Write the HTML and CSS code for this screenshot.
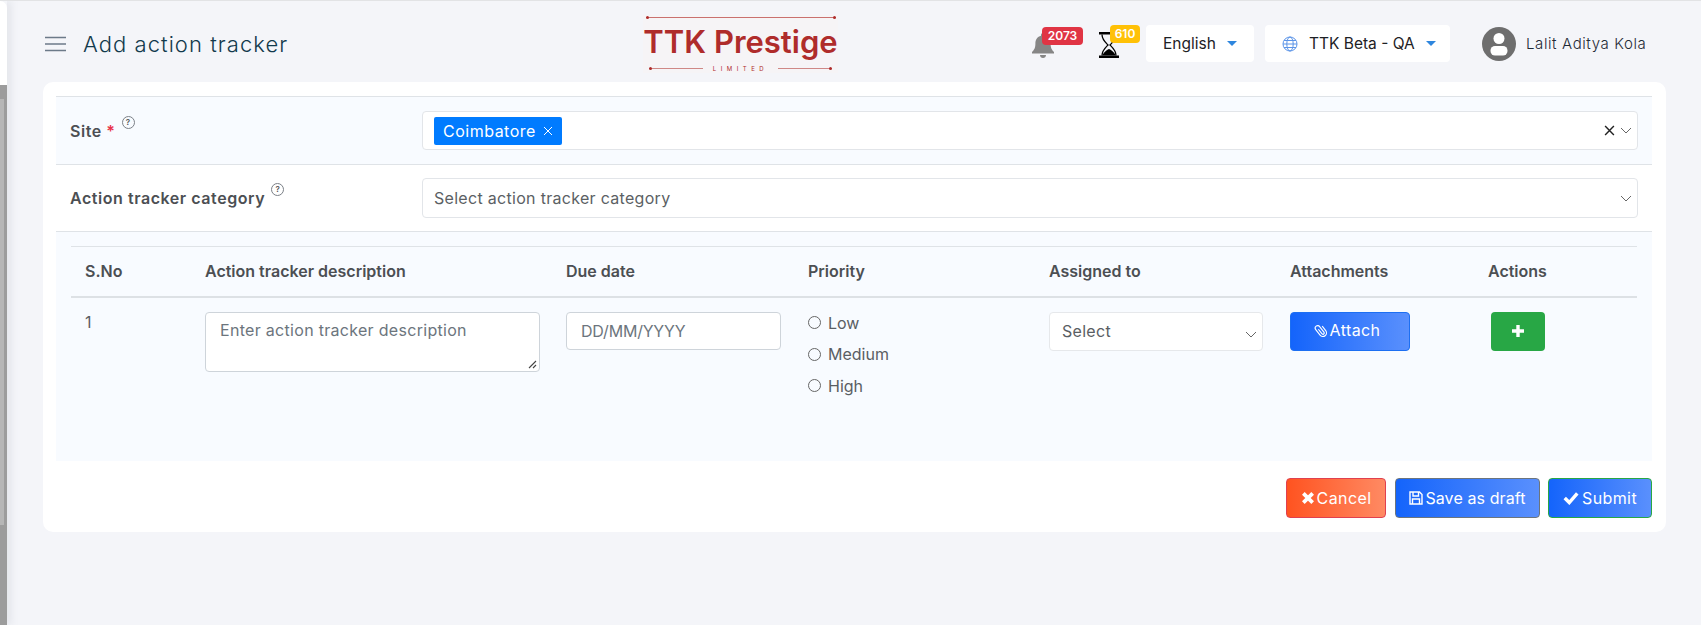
FILE: index.html
```html
<!DOCTYPE html>
<html>
<head>
    <title>Add action tracker</title>
    <link rel="stylesheet" href="styles.css">
</head>
<body>
    <div class="sidebar">
        <div class="sidebar_top"></div>
        <div class="sidebar_track"><div class="sidebar_thumb"></div></div>
    </div>
    <div class="main">
        <div class="topbar">
            <svg class="hamburger" viewBox="0 0 21 16"><path d="M0 1.500h21M0 8h21M0 14.500h21" stroke="#6c7a89" stroke-width="1.600" fill="none"/></svg>
            <div class="page_title">Add action tracker</div>
            <div class="logo">
                <div class="logo_rule"></div>
                <div class="logo_name">TTK Prestige</div>
                <div class="logo_bottom"><span class="logo_line logo_line_left"></span><span class="logo_small">LIMITED</span><span class="logo_line logo_line_right"></span></div>
            </div>
            <div class="notif notif_bell">
                <svg class="bell" viewBox="0 0 24 26"><path d="M12 1c1.200 0 2 .9 2 2v.8c3.600.9 5.600 3.900 5.600 7.700 0 4.500 1.300 6.500 3.400 8.500v1.500H1V20c2.100-2 3.400-4 3.400-8.500 0-3.800 2-6.800 5.600-7.700V3c0-1.100.8-2 2-2zM9 23h6c0 1.700-1.300 3-3 3s-3-1.300-3-3z" fill="#868686"/></svg>
                <span class="badge badge_red">2073</span>
            </div>
            <div class="notif notif_glass">
                <svg class="glass" viewBox="0 0 22 28"><path d="M1 1h20v2.500H1zM1 24.500h20V27H1z" fill="#000"/><path d="M4 3.500c0 5 3.500 8 6 10.500-2.500 2.500-6 5.500-6 10.500M18 3.500c0 5-3.500 8-6 10.500 2.500 2.500 6 5.500 6 10.500" fill="none" stroke="#000" stroke-width="1.300"/><path d="M4.500 24.500c.4-2.500 3.500-5 6.500-6.500 3 1.500 6.100 4 6.500 6.500z" fill="#000"/></svg>
                <span class="badge badge_yellow">610</span>
            </div>
            <div class="top_box box_lang">English<span class="caret"></span></div>
            <div class="top_box box_site">
                <svg class="globe" viewBox="0 0 16 16"><g fill="none" stroke="#5b94e8" stroke-width="1"><circle cx="8" cy="8" r="7"/><ellipse cx="8" cy="8" rx="3.200" ry="7"/><path d="M1 8h14M2 4.500h12M2 11.500h12"/></g></svg>
                TTK Beta - QA<span class="caret"></span>
            </div>
            <div class="user">
                <svg class="avatar" viewBox="0 0 34 34"><circle cx="17" cy="17" r="17" fill="#6e6e6e"/><circle cx="17" cy="11.500" r="5.500" fill="#fff"/><rect x="8.500" y="19" width="17" height="9.500" rx="4.500" fill="#fff"/></svg>
                <span>Lalit Aditya Kola</span>
            </div>
        </div>

        <div class="card">
            <div class="form_row row_tint">
                <div class="form_label">Site <span class="required">*</span><span class="help">?</span></div>
                <div class="select_box select_site">
                    <span class="tag">Coimbatore <svg class="tag_x" viewBox="0 0 10 10"><path d="M1 1l8 8M9 1l-8 8" stroke="#fff" stroke-width="1" fill="none"/></svg></span>
                    <svg class="clear_x" viewBox="0 0 10 10"><path d="M1 1l8 8M9 1l-8 8" stroke="#222" stroke-width="1.300" fill="none"/></svg>
                    <svg class="chevron" viewBox="0 0 12 7"><path d="M1 1l5 5 5-5" stroke="#666" stroke-width="1" fill="none"/></svg>
                </div>
            </div>
            <div class="form_row row_second">
                <div class="form_label">Action tracker category<span class="help">?</span></div>
                <div class="select_box select_category">
                    <span class="placeholder">Select action tracker category</span>
                    <svg class="chevron" viewBox="0 0 12 7"><path d="M1 1l5 5 5-5" stroke="#666" stroke-width="1" fill="none"/></svg>
                </div>
            </div>
            <div class="table_wrap">
                <table class="tracker_table">
                    <thead>
                        <tr>
                            <th class="col_no">S.No</th>
                            <th class="col_desc">Action tracker description</th>
                            <th class="col_date">Due date</th>
                            <th class="col_prio">Priority</th>
                            <th class="col_user">Assigned to</th>
                            <th class="col_att">Attachments</th>
                            <th>Actions</th>
                        </tr>
                    </thead>
                    <tbody>
                        <tr>
                            <td class="cell_no">1</td>
                            <td><div class="input_box area_box">Enter action tracker description
                                <svg class="grip" viewBox="0 0 9 9"><path d="M1 8l7-7M5 8l3-3" stroke="#444" stroke-width="1.100" fill="none"/></svg>
                            </div></td>
                            <td><div class="input_box date_box">DD/MM/YYYY</div></td>
                            <td>
                                <div class="radio_line"><span class="radio"></span>Low</div>
                                <div class="radio_line"><span class="radio"></span>Medium</div>
                                <div class="radio_line"><span class="radio"></span>High</div>
                            </td>
                            <td><div class="input_box user_box">Select
                                <svg class="chevron" viewBox="0 0 12 7"><path d="M1 1l5 5 5-5" stroke="#666" stroke-width="1" fill="none"/></svg>
                            </div></td>
                            <td><div class="btn btn_attach">
                                <svg class="clip" viewBox="0 0 16 16"><path transform="rotate(-38 8 8)" d="M6.500 5v6.500a1.500 1.500 0 0 0 3 0V3.500a2.800 2.800 0 0 0-5.600 0v8a4.100 4.100 0 0 0 8.200 0V5" stroke="#fff" stroke-width="1.300" fill="none"/></svg>Attach</div></td>
                            <td><div class="btn btn_add"><svg class="plus" viewBox="0 0 12 12"><path d="M6 0v12M0 6h12" stroke="#fff" stroke-width="3.400" fill="none"/></svg></div></td>
                        </tr>
                    </tbody>
                </table>
            </div>
            <div class="card_footer">
                <div class="btn btn_cancel"><svg class="btn_icon" viewBox="0 0 12 12"><path d="M2 2l8 8M10 2l-8 8" stroke="#fff" stroke-width="3.200" fill="none"/></svg>Cancel</div>
                <div class="btn btn_draft"><svg class="btn_icon" viewBox="0 0 14 14"><path d="M1 1h9.500L13 3.500V13H1zM4 1.500v3.500h5.500V1.500M3.500 13V8h7v5" stroke="#fff" stroke-width="1.400" fill="none"/></svg>Save as draft</div>
                <div class="btn btn_submit"><svg class="btn_icon btn_icon_check" viewBox="0 0 14 12"><path d="M1.500 6l4 4 7-8" stroke="#fff" stroke-width="3" fill="none"/></svg>Submit</div>
            </div>
        </div>
    </div>
</body>
</html>
```

FILE: styles.css
```css
html, body {
    margin: 0;
    height: 100%;
}
body {
    display: flex;
    background-color: #f4f5f9;
    border-top: 1px solid #e2e3e5;
    box-sizing: border-box;
    font-family: "Inter", "Liberation Sans", sans-serif;
    color: #4a4f55;
    overflow: hidden;
}

/* left edge */
.sidebar {
    width: 7px;
    flex: none;
    display: flex;
    flex-direction: column;
    box-shadow: 3px 0 8px rgba(120, 125, 145, 0.18);
}
.sidebar_top {
    height: 84px;
    background: #fff;
    border-top-right-radius: 8px;
}
.sidebar_track {
    flex: 1;
    background: #9c9c9c;
    padding-top: 14px;
}
.sidebar_thumb {
    width: 4px;
    height: 426px;
    background: #b6b6b6;
}

.main {
    flex: 1;
    min-width: 0;
    padding-right: 35px;
    padding-left: 36px;
}

/* top bar */
.topbar {
    height: 81px;
    padding-top: 4px;
    box-sizing: border-box;
    display: flex;
    align-items: center;
    font-size: 15px;
}
.hamburger {
    width: 21px;
    height: 16px;
    margin-left: 2px;
}
.page_title {
    font-size: 22px;
    font-weight: 300;
    color: #123a4c;
    margin-left: 17px;
    width: 560px;
    letter-spacing: 1.05px;
    flex: none;
}
.logo {
    width: 195px;
    height: 58px;
    flex: none;
    background: #f6f4f6;
    color: #af2c2b;
    display: flex;
    flex-direction: column;
    align-items: center;
}
.logo_rule {
    position: relative;
    width: 190px;
    height: 1px;
    margin-top: 2px;
    background: #c9716f;
}
.logo_rule::before,
.logo_rule::after,
.logo_line::before {
    content: "";
    position: absolute;
    top: -1px;
    width: 3px;
    height: 3px;
    border-radius: 50%;
    background: #af2c2b;
}
.logo_rule::before { left: 0; }
.logo_rule::after { right: 0; }
.logo_name {
    font-family: "Inter", sans-serif;
    font-size: 31px;
    font-weight: 600;
    line-height: 40px;
    margin-top: 4px;
    white-space: nowrap;
}
.logo_bottom {
    display: flex;
    align-items: center;
    gap: 10px;
    margin-top: 3px;
}
.logo_line {
    position: relative;
    width: 54px;
    height: 1px;
    background: #cf8886;
}
.logo_line_left::before { left: 0; }
.logo_line_right::before { right: 0; }
.logo_small {
    font-size: 6px;
    letter-spacing: 4.500px;
}
.notif {
    position: relative;
    flex: none;
    margin-top: 2px;
}
.notif_bell {
    width: 26px;
    height: 26px;
    margin-left: 193px;
}
.bell {
    width: 24px;
    height: 26px;
}
.notif_glass {
    width: 24px;
    height: 28px;
    margin-left: 41px;
}
.glass {
    width: 22px;
    height: 28px;
}
.badge {
    position: absolute;
    font-size: 12px;
    font-weight: 600;
    color: #fff;
    height: 18px;
    line-height: 18px;
    border-radius: 4px;
    text-align: center;
}
.badge_red {
    background: #e03444;
    width: 41px;
    left: 11px;
    top: -5px;
}
.badge_yellow {
    background: #ffc107;
    width: 30px;
    left: 12px;
    top: -6px;
}
.top_box {
    height: 37px;
    background: #fff;
    border-radius: 4px;
    color: #1d2125;
    font-size: 15.500px;
    display: flex;
    align-items: center;
    box-sizing: border-box;
    flex: none;
}
.box_lang {
    width: 108px;
    margin-left: 24px;
    padding-left: 17px;
}
.box_site {
    width: 185px;
    margin-left: 11px;
    padding-left: 17px;
}
.caret {
    width: 0;
    height: 0;
    border: 5px solid transparent;
    border-top: 5px solid #2e86de;
    border-bottom: none;
    margin-left: 11px;
}
.globe {
    width: 16px;
    height: 16px;
    margin-right: 11px;
}
.user {
    display: flex;
    align-items: center;
    margin-left: 32px;
    font-size: 15px;
    letter-spacing: 0.6px;
    font-weight: 300;
    color: #1f2a36;
    white-space: nowrap;
}
.avatar {
    width: 34px;
    height: 34px;
    margin-right: 10px;
}

/* card */
.card {
    background: #fff;
    border-radius: 10px;
    padding: 14px 14px 14px 13px;
    height: 450px;
    box-sizing: border-box;
}
.form_row {
    display: flex;
    align-items: center;
    border-top: 1px solid #dfe3e7;
    padding-left: 14px;
    padding-right: 14px;
}
.row_tint {
    background: #f8fbff;
    height: 68px;
    box-sizing: border-box;
}
.row_second {
    height: 68px;
    box-sizing: border-box;
    border-bottom: 1px solid #dfe3e7;
}
.form_label {
    width: 352px;
    flex: none;
    font-size: 16px;
    letter-spacing: 0.55px;
    font-weight: 600;
    color: #4c4f53;
    padding-bottom: 5px;
}
.required {
    color: #e8334a;
}
.help {
    display: inline-block;
    width: 11px;
    height: 11px;
    line-height: 11px;
    border: 1px solid #7b8087;
    border-radius: 50%;
    font-size: 8px;
    letter-spacing: 0;
    text-align: center;
    margin-left: 6px;
    vertical-align: 12px;
    color: #555;
}
.select_box {
    flex: 1;
    display: flex;
    align-items: center;
    background: #fff;
    border: 1px solid #e2e5e9;
    border-radius: 4px;
    box-sizing: border-box;
    padding-left: 11px;
    padding-right: 5px;
}
.select_site {
    height: 39px;
}
.select_category {
    height: 40px;
}
.tag {
    background: #007bff;
    color: #fff;
    font-size: 16px;
    letter-spacing: 0.5px;
    height: 28px;
    line-height: 28px;
    border-radius: 2px;
    padding: 0 9px;
    display: flex;
    align-items: center;
}
.tag_x {
    width: 10px;
    height: 10px;
    margin-left: 7px;
}
.clear_x {
    width: 11px;
    height: 11px;
    margin-left: auto;
    margin-right: 5px;
}
.chevron {
    width: 12px;
    height: 7px;
}
.select_category .chevron {
    margin-left: auto;
}
.placeholder {
    font-size: 16px;
    letter-spacing: 0.3px;
    color: #5b5f64;
}

/* table */
.table_wrap {
    background: #f8fbff;
    padding: 14px 15px 0 15px;
    height: 229px;
    box-sizing: border-box;
}
.tracker_table {
    width: 100%;
    table-layout: fixed;
    border-collapse: collapse;
    border-top: 1px solid #dfe3e7;
}
.tracker_table th {
    box-sizing: border-box;
    text-align: left;
    font-size: 16px;
    font-weight: 600;
    color: #4c4f53;
    height: 50px;
    padding: 0 12px 0 14px;
    border-bottom: 2px solid #dde1e5;
}
.tracker_table td {
    vertical-align: top;
    padding: 14px 12px 0 14px;
    font-size: 16px;
    color: #5a5e63;
}
.col_no { width: 120px; }
.col_desc { width: 361px; }
.col_date { width: 242px; }
.col_prio { width: 241px; }
.col_user { width: 241px; }
.col_att { width: 198px; }
.cell_no {
    line-height: 20px;
}
.input_box {
    position: relative;
    background: #fff;
    border: 1px solid #ced4da;
    border-radius: 4px;
    box-sizing: border-box;
    color: #6c757d;
    padding-left: 14px;
}
.area_box {
    height: 60px;
    padding-top: 7px;
    letter-spacing: 0.3px;
}
.date_box {
    height: 38px;
    line-height: 36px;
    letter-spacing: -0.2px;
    margin-right: 1px;
}
.user_box {
    height: 39px;
    line-height: 37px;
    border-color: #e6e8eb;
    padding-left: 12px;
    color: #5a5e63;
    letter-spacing: 0.3px;
    margin-right: 1px;
}
.user_box .chevron {
    position: absolute;
    right: 5px;
    top: 18px;
}
.grip {
    position: absolute;
    right: 2px;
    bottom: 2px;
    width: 9px;
    height: 9px;
}
.radio_line {
    display: flex;
    align-items: center;
    height: 32px;
    margin-top: -5px;
    margin-bottom: 4.500px;
}
.radio {
    width: 11px;
    height: 11px;
    border: 1px solid #666;
    border-radius: 50%;
    margin-right: 7px;
}
.btn {
    display: flex;
    align-items: center;
    justify-content: center;
    box-sizing: border-box;
    color: #fff;
    font-size: 16px;
    letter-spacing: 0.4px;
    border-radius: 4px;
}
.btn_attach {
    width: 120px;
    height: 39px;
    background: linear-gradient(to right, #1464fb, #5a90fd);
    border: 1px solid #1d6ff2;
    padding-bottom: 2px;
    padding-right: 6px;
}
.clip {
    width: 14px;
    height: 15px;
    margin-right: 2px;
}
.btn_add {
    width: 54px;
    height: 39px;
    margin-left: 3px;
    background: #28a745;
}
.plus {
    width: 12px;
    height: 12px;
}
.card_footer {
    display: flex;
    justify-content: flex-end;
    gap: 8px;
    margin-top: 17px;
}
.card_footer .btn {
    height: 40px;
    border-style: solid;
    border-width: 1px;
}
.btn_icon {
    width: 14px;
    height: 14px;
    margin-right: 2px;
}
.btn_icon_check {
    width: 16px;
    margin-right: 3px;
}
.btn_cancel {
    width: 100px;
    margin-right: 1px;
    background: linear-gradient(to right, #ff5320, #ff8a63);
    border-color: #e0404f;
}
.btn_draft {
    width: 145px;
    background: linear-gradient(to right, #1464fb, #5a90fd);
    border-color: #6c757d;
    letter-spacing: 0.1px;
}
.btn_submit {
    width: 104px;
    background: linear-gradient(to right, #1464fb, #5a90fd);
    border-color: #28a745;
}
```
